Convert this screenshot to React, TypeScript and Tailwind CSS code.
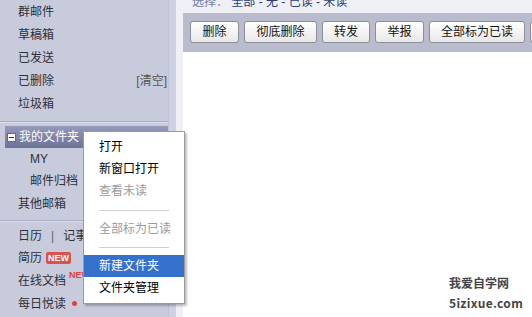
import React from 'react';

const font = { fontFamily: '"Liberation Sans", "Noto Sans CJK SC", sans-serif' };

const Sep = ({ className = '' }: { className?: string }) => (
  <div className={`border-t border-[#a9acc2] border-b border-b-[#dcdee9] ${className}`} />
);

const Sidebar: React.FC = () => (
  <div className="w-[168px] shrink-0 bg-[#c8cbdc] text-[12px] text-[#2d2f3a] flex flex-col">
    {['群邮件', '草稿箱', '已发送'].map((t) => (
      <div key={t} className="h-[23px] flex items-center pl-[18px]">{t}</div>
    ))}
    <div className="h-[23px] flex items-center pl-[18px] pr-[1px] justify-between">
      <span>已删除</span>
      <span className="text-[#555]">[清空]</span>
    </div>
    <div className="h-[23px] flex items-center pl-[18px]">垃圾箱</div>
    <Sep className="mt-[6px] mb-[3px]" />
    <div className="h-[22px] ml-[5px] flex items-center bg-gradient-to-b from-[#9599ba] to-[#6d7298] text-white">
      <span className="ml-[2px] mr-[3px] w-[9px] h-[9px] bg-white border border-[#666a88] flex items-center justify-center">
        <span className="w-[5px] h-[1px] bg-[#333]" />
      </span>
      我的文件夹
    </div>
    <div className="h-[22px] flex items-center pl-[30px]">MY</div>
    <div className="h-[22px] flex items-center pl-[30px]">邮件归档</div>
    <div className="h-[23px] flex items-center pl-[18px]">其他邮箱</div>
    <Sep className="mt-[5px] mb-[3px]" />
    <div className="h-[22px] flex items-center pl-[18px]">
      日历<span className="mx-[9px] text-[#666]">|</span>记事本
    </div>
    <div className="h-[22px] flex items-center pl-[18px]">
      简历
      <span className="ml-[4px] px-[2px] h-[12px] leading-[12px] rounded-[2px] bg-[#d9534f] text-white text-[9px] font-bold">NEW</span>
    </div>
    <div className="h-[23px] flex items-center pl-[18px]">
      在线文档
      <span className="ml-[3px] -mt-[10px] text-[#e0413a] text-[9px] font-bold">NEW</span>
    </div>
    <div className="h-[23px] flex items-center pl-[18px]">
      每日悦读
      <span className="ml-[6px] w-[5px] h-[5px] rounded-full bg-[#e0413a]" />
    </div>
  </div>
);

const Btn = ({ w, children }: { w: string; children: React.ReactNode }) => (
  <div
    className={`${w} h-[22px] shrink-0 rounded-[3px] border border-[#8e8e96] bg-gradient-to-b from-white to-[#e8e8ea] flex items-center justify-center text-[12px] text-[#111]`}
  >
    {children}
  </div>
);

const Menu: React.FC = () => (
  <div className="absolute left-[83px] top-[131px] w-[102px] py-[4px] bg-white border border-[#9a9a9a] shadow-[2px_2px_2px_rgba(0,0,0,0.25)] text-[12px]">
    <div className="h-[22px] flex items-center pl-[15px] text-black">打开</div>
    <div className="h-[22px] flex items-center pl-[15px] text-black">新窗口打开</div>
    <div className="h-[22px] flex items-center pl-[15px] text-[#9a9a9a]">查看未读</div>
    <div className="h-[16px] flex items-center px-[15px]">
      <div className="w-full h-[1px] bg-[#cfcfcf]" />
    </div>
    <div className="h-[22px] flex items-center pl-[15px] text-[#9a9a9a]">全部标为已读</div>
    <div className="h-[15px] flex items-center px-[15px]">
      <div className="w-full h-[1px] bg-[#cfcfcf]" />
    </div>
    <div className="h-[22px] flex items-center pl-[15px] bg-[#3471cd] text-white">新建文件夹</div>
    <div className="h-[22px] flex items-center pl-[15px] text-black">文件夹管理</div>
  </div>
);

export default function App() {
  return (
    <div className="relative w-[532px] h-[317px] overflow-hidden flex bg-white" style={font}>
      <Sidebar />
      <div className="w-[8px] shrink-0 bg-[#ced1e1] border-l border-[#bfc2d5]" />
      <div className="w-[7px] shrink-0 bg-[#eef0f5]" />
      <div className="flex-1 flex flex-col min-w-0">
        <div className="h-[13px] bg-[#eef0f5] overflow-hidden pl-[9px] text-[12px] whitespace-nowrap">
          <div className="-mt-[7px]">
            <span className="text-[#6d82ad]">选择：</span>
            <span className="text-[#24407d]"> 全部 - 无 - 已读 - 未读</span>
          </div>
        </div>
        <div className="h-[39px] bg-[#b9bccd] flex items-start pt-[8px] pl-[7px] gap-[5px]">
          <Btn w="w-[49px]">删除</Btn>
          <Btn w="w-[73px]">彻底删除</Btn>
          <Btn w="w-[48px]">转发</Btn>
          <Btn w="w-[49px]">举报</Btn>
          <Btn w="w-[96px]">全部标为已读</Btn>
          <Btn w="w-[60px]">移动</Btn>
        </div>
        <div className="flex-1 flex items-end justify-end pr-[9px] pb-[4px]">
          <div className="text-[12px] font-bold text-[#444] leading-[20px]" style={{ fontFamily: '"Noto Sans CJK SC", "Liberation Sans", sans-serif' }}>
            <div>我爱自学网</div>
            <div className="tracking-[0.3px]">5izixue.com</div>
          </div>
        </div>
      </div>
      <Menu />
    </div>
  );
}
